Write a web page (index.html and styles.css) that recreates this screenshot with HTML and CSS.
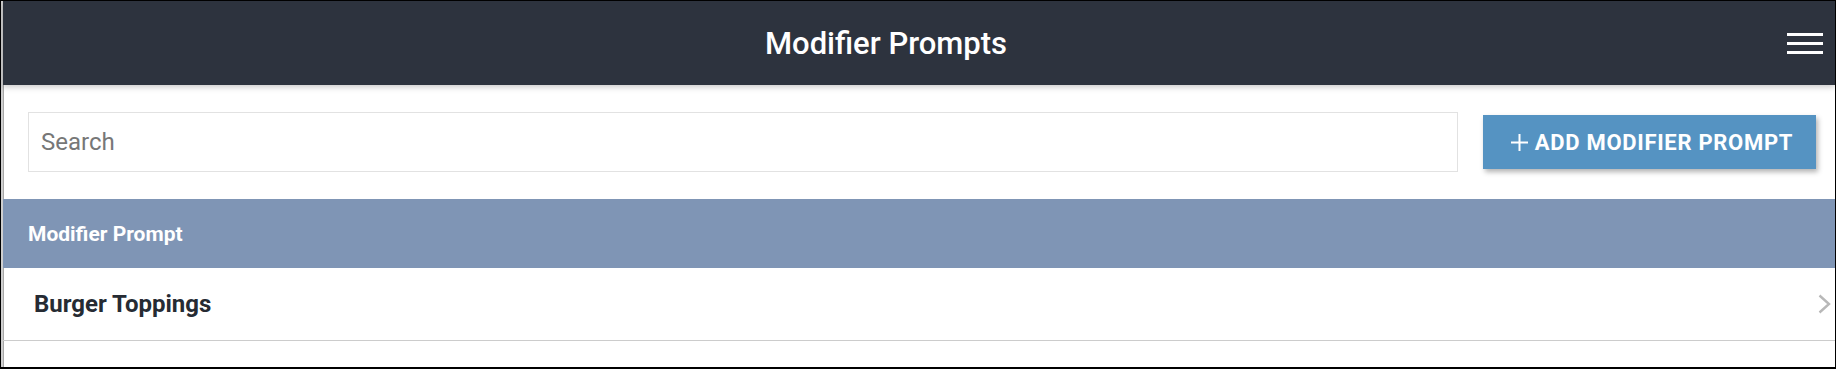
FILE: index.html
```html
<!DOCTYPE html>
<html lang="en">
<head>
<meta charset="utf-8">
<title>Modifier Prompts</title>
<link rel="stylesheet" href="styles.css">
</head>
<body>
<div class="frame">
  <div class="inner">
    <header class="topbar">
      <h1 class="title">Modifier Prompts</h1>
      <button class="menu" aria-label="Menu">
        <svg width="36" height="21" viewBox="0 0 36 21">
          <rect x="0" y="0" width="36" height="3" fill="#fff"/>
          <rect x="0" y="9" width="36" height="3" fill="#fff"/>
          <rect x="0" y="18" width="36" height="3" fill="#fff"/>
        </svg>
      </button>
    </header>
    <div class="toolbar">
      <input class="search" type="text" placeholder="Search">
      <button class="add">
        <svg class="plus" width="19" height="19" viewBox="0 0 19 19">
          <path d="M9.5 1 V18 M1 9.5 H18" stroke="#fff" stroke-width="2" fill="none"/>
        </svg>
        <span>ADD MODIFIER PROMPT</span>
      </button>
    </div>
    <div class="table">
      <div class="thead">Modifier Prompt</div>
      <div class="row">
        <span class="row-label">Burger Toppings</span>
        <svg class="chev" width="13" height="20" viewBox="0 0 13 20">
          <path d="M1.5 1.5 L11 10 L1.5 18.5" stroke="#b8b8b8" stroke-width="2.4" fill="none"/>
        </svg>
      </div>
    </div>
  </div>
</div>
</body>
</html>
```

FILE: styles.css
```css
* { box-sizing: border-box; }
html, body {
  margin: 0;
  padding: 0;
  background: #fff;
  width: 1836px;
  height: 369px;
  overflow: hidden;
}
body {
  font-family: Roboto, "Liberation Sans", Arial, sans-serif;
}
.frame {
  width: 1836px;
  height: 369px;
  border-top: 1px solid #000;
  border-left: 1px solid #000;
  border-right: 1px solid #000;
  border-bottom: 2px solid #000;
  overflow: hidden;
}
.inner {
  height: 100%;
  border-left: 2px solid #cfcfcf;
  box-shadow: inset 1px 0 0 #a8a8a8;
  display: flex;
  flex-direction: column;
}
.topbar {
  height: 84px;
  flex: none;
  background: #2d333e;
  display: flex;
  align-items: center;
  box-shadow: 0 2px 6px rgba(0, 0, 0, 0.22);
  position: relative;
  z-index: 1;
}
.title {
  flex: 1;
  margin: 0;
  text-align: center;
  color: #fff;
  font-size: 31px;
  font-weight: 500;
  line-height: 1;
}
.menu {
  width: 66px;
  height: 84px;
  padding: 0 12px 0 18px;
  border: 0;
  background: transparent;
  display: flex;
  align-items: center;
  justify-content: center;
}
.menu svg { display: block; }
.toolbar {
  flex: none;
  display: flex;
  align-items: center;
  gap: 25px;
  padding: 27px 19px 27px 25px;
}
.search {
  flex: 1;
  height: 60px;
  border: 1px solid #e2e2e2;
  padding: 0 12px;
  font-family: Roboto, "Liberation Sans", Arial, sans-serif;
  font-size: 24px;
  color: #333;
  outline: none;
}
.search::placeholder { color: #777; }
.add {
  width: 333px;
  height: 54px;
  border: 0;
  background: #5593c2;
  color: #fff;
  display: flex;
  align-items: center;
  justify-content: center;
  gap: 6px;
  font-family: Roboto, "Liberation Sans", Arial, sans-serif;
  font-size: 22px;
  font-weight: 700;
  letter-spacing: 0.7px;
  box-shadow: 2px 3px 5px rgba(0, 0, 0, 0.3);
  padding: 0 20px 0 24px;
}
.plus { display: block; }
.thead {
  height: 69px;
  background: #7f95b5;
  color: #fff;
  font-size: 21px;
  font-weight: 700;
  display: flex;
  align-items: center;
  padding-left: 25px;
}
.row {
  height: 73px;
  border-bottom: 1px solid #cccccc;
  display: flex;
  align-items: center;
  justify-content: space-between;
  padding: 0 4px 0 31px;
}
.row-label {
  font-size: 24px;
  font-weight: 700;
  color: #262b33;
}
.chev { display: block; }
```
